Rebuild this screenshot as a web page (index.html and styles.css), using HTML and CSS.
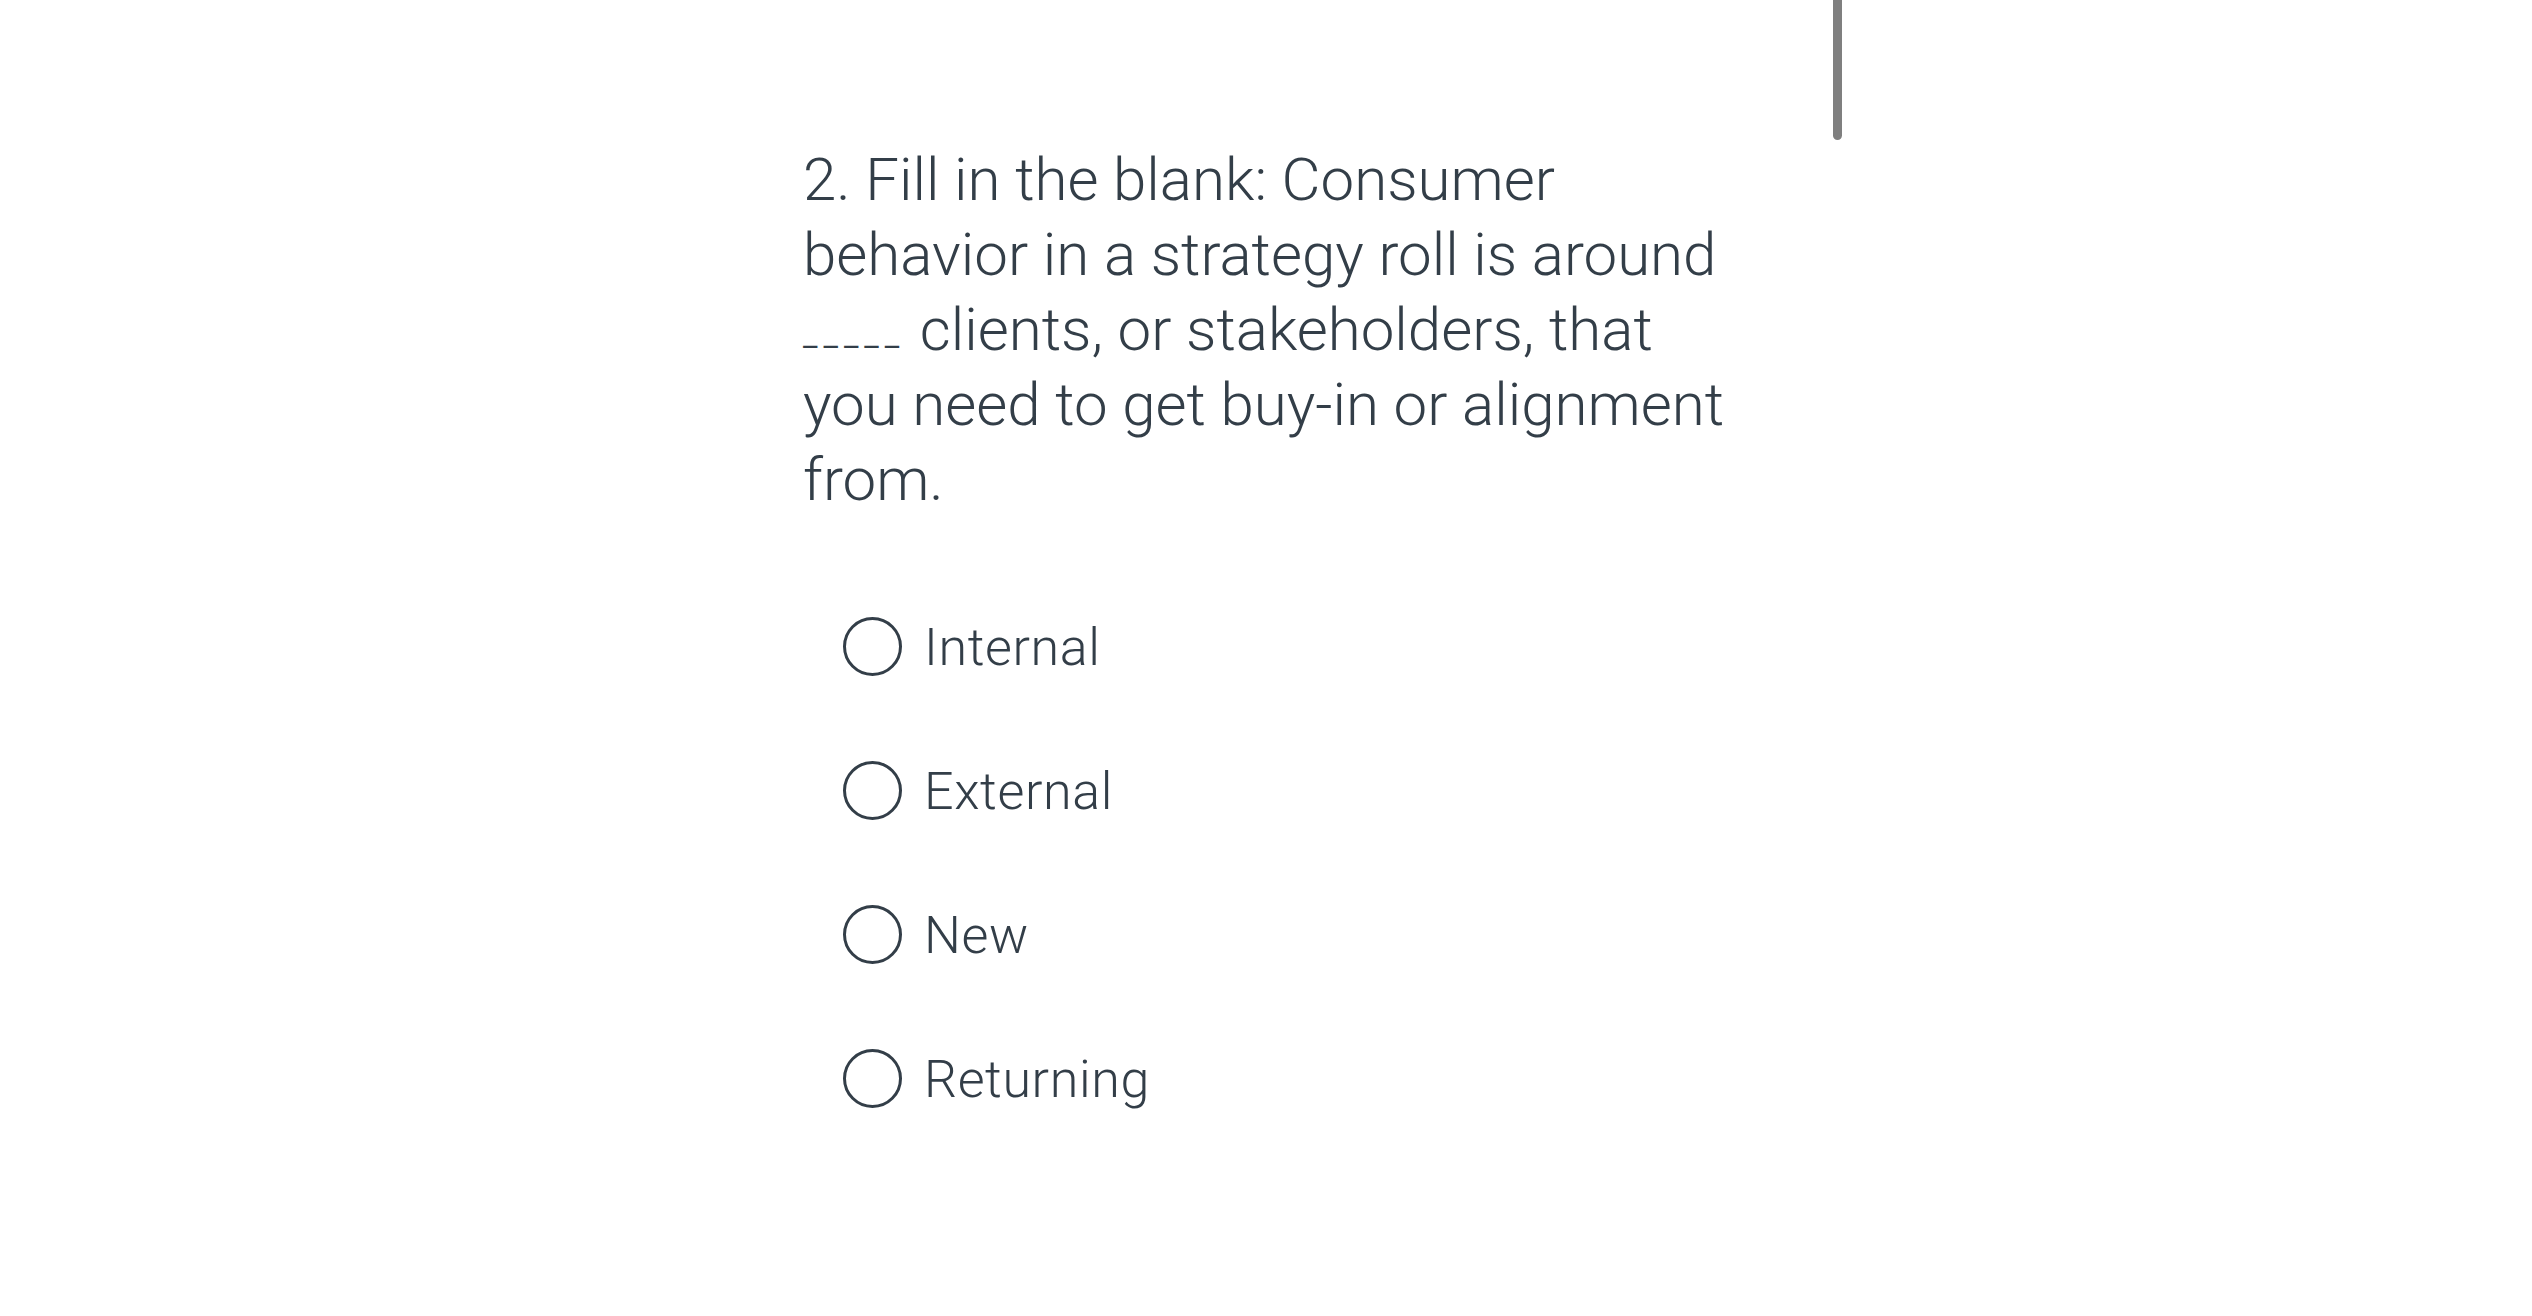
FILE: index.html
```html
<!DOCTYPE html>
<html lang="en">
<head>
<meta charset="utf-8">
<title>Question 2</title>
<link rel="stylesheet" href="styles.css">
</head>
<body>
<div class="page">
  <div class="scrollbar"></div>
  <main class="question">
    <h2 class="question-title">2. Fill in the blank: Consumer behavior in a strategy roll is around <span class="blank">_____</span> clients, or stakeholders, that you need to get buy-in or alignment from.</h2>
    <ul class="options">
      <li class="option"><span class="radio"></span><span class="label">Internal</span></li>
      <li class="option"><span class="radio"></span><span class="label">External</span></li>
      <li class="option"><span class="radio"></span><span class="label">New</span></li>
      <li class="option"><span class="radio"></span><span class="label">Returning</span></li>
    </ul>
  </main>
</div>
</body>
</html>
```

FILE: styles.css
```css
html, body {
  margin: 0;
  padding: 0;
  background: #ffffff;
}
.page {
  position: relative;
  width: 2532px;
  height: 1316px;
  overflow: hidden;
}
.scrollbar {
  position: absolute;
  left: 1833px;
  top: -10px;
  width: 9px;
  height: 150px;
  border-radius: 5px;
  background: #7f7f7f;
}
.question {
  padding: 142px 0 0 803px;
  width: 940px;
  font-family: Roboto, "Open Sans", sans-serif;
  color: #333e48;
}
.question-title {
  margin: 0;
  font-size: 60px;
  font-weight: 300;
  line-height: 75px;
}
.blank {
  font-size: 32px;
  font-weight: 400;
  letter-spacing: 6px;
  line-height: 0;
  vertical-align: 4px;
}
.options {
  list-style: none;
  margin: 0;
  padding: 100px 0 0 40px;
  display: flex;
  flex-direction: column;
  gap: 86px;
}
.option {
  display: flex;
  align-items: center;
  gap: 22px;
  height: 58px;
}
.radio {
  box-sizing: border-box;
  width: 59px;
  height: 59px;
  border: 3px solid #333e48;
  border-radius: 50%;
  flex: none;
}
.label {
  font-size: 52px;
  font-weight: 300;
  line-height: 58px;
  letter-spacing: 0.6px;
  padding-top: 4px;
}
```
